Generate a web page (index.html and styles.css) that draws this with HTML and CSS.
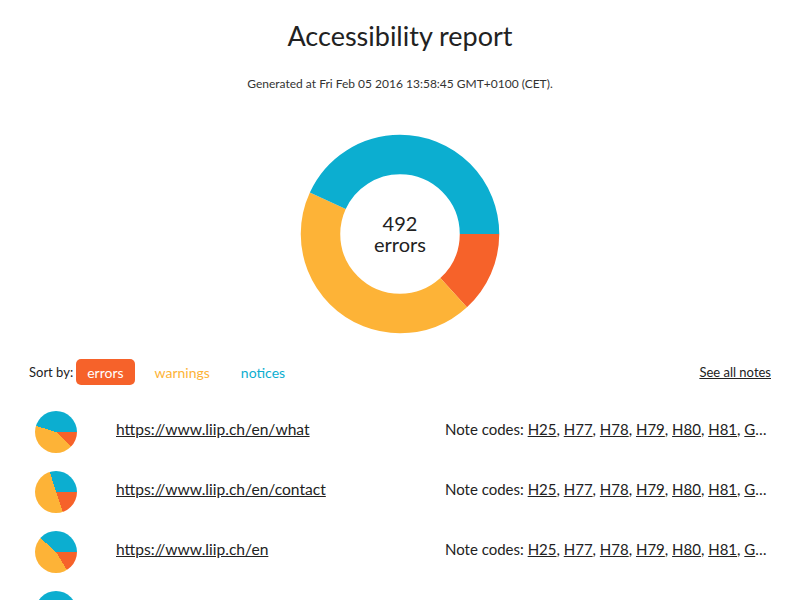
FILE: index.html
```html
<!DOCTYPE html>
<html lang="en">
<head>
    <meta charset="UTF-8">
    <meta name="viewport" content="width=device-width, initial-scale=1.0">
    <title>Accessibility report</title>
    <link rel="stylesheet" href="styles.css">
</head>
<body>
    <header>
        <h1>Accessibility report</h1>
        <p class="generated">Generated at Fri Feb 05 2016 13:58:45 GMT+0100 (CET).</p>
    </header>

    <div class="donut">
        <svg width="200" height="200" viewBox="0 0 200 200">
            <!-- circumference = 2 * PI * 79.5 = 499.5 -->
            <circle class="seg seg-errors" cx="100" cy="100" r="79.5" stroke-dasharray="65.9 499.5" stroke-dashoffset="0"></circle>
            <circle class="seg seg-warnings" cx="100" cy="100" r="79.5" stroke-dasharray="217.8 499.5" stroke-dashoffset="-65.9"></circle>
            <circle class="seg seg-notices" cx="100" cy="100" r="79.5" stroke-dasharray="215.8 499.5" stroke-dashoffset="-283.7"></circle>
        </svg>
        <div class="donut-label">
            <span>492</span>
            <span>errors</span>
        </div>
    </div>

    <div class="toolbar">
        <div class="sort">
            <span>Sort by:</span>
            <button class="sort-btn errors active">errors</button>
            <button class="sort-btn warnings">warnings</button>
            <button class="sort-btn notices">notices</button>
        </div>
        <a href="#" class="all-notes">See all notes</a>
    </div>

    <ul class="pages">
        <li class="page-row">
            <div class="pie-cell"><div class="pie" style="--e: 43deg; --w: 197deg;"></div></div>
            <a href="#" class="page-url">https://www.liip.ch/en/what</a>
            <div class="codes">Note codes: <a href="#">H25</a>, <a href="#">H77</a>, <a href="#">H78</a>, <a href="#">H79</a>, <a href="#">H80</a>, <a href="#">H81</a>, <a href="#">G18</a>, <a href="#">G145</a></div>
        </li>
        <li class="page-row">
            <div class="pie-cell"><div class="pie" style="--e: 71deg; --w: 253deg;"></div></div>
            <a href="#" class="page-url">https://www.liip.ch/en/contact</a>
            <div class="codes">Note codes: <a href="#">H25</a>, <a href="#">H77</a>, <a href="#">H78</a>, <a href="#">H79</a>, <a href="#">H80</a>, <a href="#">H81</a>, <a href="#">G18</a>, <a href="#">G145</a></div>
        </li>
        <li class="page-row">
            <div class="pie-cell"><div class="pie" style="--e: 59deg; --w: 222deg;"></div></div>
            <a href="#" class="page-url">https://www.liip.ch/en</a>
            <div class="codes">Note codes: <a href="#">H25</a>, <a href="#">H77</a>, <a href="#">H78</a>, <a href="#">H79</a>, <a href="#">H80</a>, <a href="#">H81</a>, <a href="#">G18</a>, <a href="#">G145</a></div>
        </li>
        <li class="page-row">
            <div class="pie-cell"><div class="pie" style="--e: 50deg; --w: 210deg;"></div></div>
            <a href="#" class="page-url">https://www.liip.ch/en/work</a>
            <div class="codes">Note codes: <a href="#">H25</a>, <a href="#">H77</a>, <a href="#">H78</a>, <a href="#">H79</a>, <a href="#">H80</a>, <a href="#">H81</a>, <a href="#">G18</a>, <a href="#">G145</a></div>
        </li>
    </ul>
</body>
</html>
```

FILE: styles.css
```css
:root {
    --errors: #f6622a;
    --warnings: #fdb337;
    --notices: #0caed0;
    --text: #222;
}

body {
    font-family: Lato, "Open Sans", sans-serif;
    margin: 0;
    padding: 0 29px;
    color: var(--text);
    background: #fff;
}

header {
    text-align: center;
}

h1 {
    font-size: 27px;
    font-weight: normal;
    line-height: 36px;
    margin: 18px 0 0;
}

.generated {
    font-size: 12px;
    line-height: 18px;
    margin: 21px 0 0;
    color: #333;
}

.donut {
    position: relative;
    width: 200px;
    height: 200px;
    margin: 41px auto 0;
}

.donut svg {
    display: block;
}

.seg {
    fill: none;
    stroke-width: 39.5;
}

.seg-errors { stroke: var(--errors); }
.seg-warnings { stroke: var(--warnings); }
.seg-notices { stroke: var(--notices); }

.donut-label {
    position: absolute;
    inset: 0;
    display: flex;
    flex-direction: column;
    align-items: center;
    justify-content: center;
    font-size: 20px;
    line-height: 21px;
}

.toolbar {
    display: flex;
    justify-content: space-between;
    align-items: center;
    margin-top: 25px;
    font-size: 13px;
}

.sort {
    display: flex;
    align-items: center;
}

.sort-btn {
    font-family: inherit;
    font-size: 14px;
    background: none;
    border: none;
    border-radius: 5px;
    padding: 0 11px;
    height: 26px;
    margin-left: 9px;
    cursor: pointer;
}

.sort-btn.errors { color: var(--errors); }
.sort-btn.warnings { color: var(--warnings); }
.sort-btn.notices { color: var(--notices); }

.sort-btn.active {
    background: var(--errors);
    color: #fff;
    margin-left: 3px;
}

.all-notes {
    color: var(--text);
}

.pages {
    list-style: none;
    margin: 17px 0 0;
    padding: 0;
}

.page-row {
    display: flex;
    align-items: center;
    height: 60px;
    font-size: 15px;
}

.pie-cell {
    width: 87px;
    flex-shrink: 0;
}

.pie {
    width: 42px;
    height: 42px;
    margin-left: 6px;
    border-radius: 50%;
    background: conic-gradient(from 90deg,
        var(--errors) 0 var(--e),
        var(--warnings) var(--e) var(--w),
        var(--notices) var(--w) 360deg);
}

.page-url {
    flex: 1;
    font-size: 15.6px;
    color: var(--text);
    margin-top: -6px;
}

.codes {
    width: 326px;
    white-space: nowrap;
    overflow: hidden;
    text-overflow: ellipsis;
    margin-top: -6px;
}

.codes a {
    color: var(--text);
}
```
